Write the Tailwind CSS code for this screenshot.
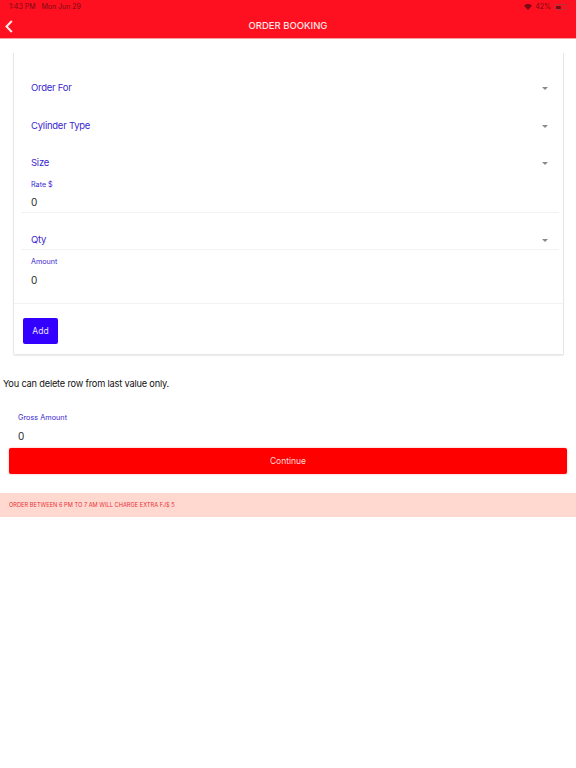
<!DOCTYPE html>
<html lang="en">
<head>
  <meta charset="UTF-8">
  <meta name="viewport" content="width=device-width, initial-scale=1.0">
  <title>Order Booking</title>
  <script src="https://cdn.jsdelivr.net/npm/@tailwindcss/browser@4"></script>
</head>
<body class="bg-white font-['Inter',sans-serif] w-[576px] h-[768px] overflow-hidden">

  <!-- Header with status bar -->
  <div class="h-[39px] bg-[#ff1020] border-b border-[#f8a0a0]">
    <div class="h-[14px] flex justify-between items-center pl-[9px] pr-[9px] text-[7px] text-[#7a0a14]">
      <div class="flex gap-[6px]"><span>1:43 PM</span><span>Mon Jun 29</span></div>
      <div class="flex items-center gap-[3px]">
        <svg class="w-[8px] h-[6px]" viewBox="0 0 16 12" fill="#7a0a14"><path d="M8 12 0 3.500C4.500-1 11.500-1 16 3.500Z"/></svg>
        <span>42%</span>
        <div class="w-[13px] h-[6px] rounded-[2px] border border-[#b8303a] flex p-[0.5px]"><div class="w-[5px] bg-[#7a0a14] rounded-[1px]"></div></div>
      </div>
    </div>
    <div class="h-[24px] relative flex items-center justify-center">
      <svg class="absolute left-[5px] top-[6px] w-[8px] h-[13px]" viewBox="0 0 8 13" fill="none" stroke="#ffe8e8" stroke-width="2"><path d="M6.800 1 1.500 6.500l5.300 5.500"/></svg>
      <span class="text-[9.500px] font-medium text-[#ffe4e4]">ORDER BOOKING</span>
    </div>
  </div>

  <!-- Form card -->
  <div class="ml-[13px] mt-[14px] w-[551px] h-[302px] border-x border-b border-[#e6e6e6] rounded-b-[2px] shadow-[0_1px_1px_rgba(0,0,0,0.08)]">
    <div class="pt-[16px] pl-[17px] pr-[15px] text-[#3a1fd0]">
      <div class="h-[38px] flex items-center justify-between text-[9.500px] tracking-[-0.25px]">
        <span>Order For</span>
        <div class="w-0 h-0 border-x-[3px] border-x-transparent border-t-[3px] border-t-[#8a8a8a]"></div>
      </div>
      <div class="h-[38px] flex items-center justify-between text-[9.500px] tracking-[-0.25px]">
        <span>Cylinder Type</span>
        <div class="w-0 h-0 border-x-[3px] border-x-transparent border-t-[3px] border-t-[#8a8a8a]"></div>
      </div>
      <div class="h-[36px] flex items-center justify-between text-[9.500px] tracking-[-0.25px]">
        <span>Size</span>
        <div class="w-0 h-0 border-x-[3px] border-x-transparent border-t-[3px] border-t-[#8a8a8a]"></div>
      </div>
    </div>

    <div class="ml-[7px] mr-[4px] h-[33px] border-b border-[#f2f2f2] pl-[10px] -mt-[1px]">
      <div class="text-[7.200px] leading-[10px] text-[#3a1fd0]">Rate $</div>
      <div class="text-[10px] leading-[12px] text-[#2a2a2a] mt-[6px]">0</div>
    </div>

    <div class="ml-[7px] mr-[4px] h-[37px] border-b border-[#f2f2f2] pl-[10px] pr-[11px] flex items-end justify-between text-[#3a1fd0]">
      <span class="text-[9.500px] tracking-[-0.25px] leading-[12px] mb-[3px]">Qty</span>
      <div class="w-0 h-0 mb-[7px] border-x-[3px] border-x-transparent border-t-[3px] border-t-[#8a8a8a]"></div>
    </div>

    <div class="h-[54px] border-b border-[#f2f2f2] pl-[17px]">
      <div class="text-[7.200px] leading-[10px] text-[#3a1fd0] pt-[7px]">Amount</div>
      <div class="text-[10px] leading-[12px] text-[#2a2a2a] mt-[7px]">0</div>
    </div>

    <div class="pl-[9px] pt-[14px]">
      <div class="w-[35px] h-[26px] rounded-[2px] bg-[#3300ff] text-[#e8e0ff] text-[8.500px] flex items-center justify-center">Add</div>
    </div>
  </div>

  <p class="pl-[3px] mt-[23px] text-[9.250px] tracking-[-0.2px] leading-[12px] text-[#111]">You can delete row from last value only.</p>

  <!-- Gross amount -->
  <div class="pl-[18px] mt-[23px]">
    <div class="text-[7.300px] leading-[10px] text-[#3a1fd0]">Gross Amount</div>
    <div class="text-[10px] leading-[12px] text-[#2a2a2a] mt-[7px]">0</div>
  </div>

  <div class="ml-[9px] mt-[6px] w-[558px] h-[26px] rounded-[2px] bg-[#ff0000] shadow-[0_0_2px_rgba(255,0,0,0.4)] text-[#ffd8d8] text-[8.500px] flex items-center justify-center">Continue</div>

  <div class="mt-[19px] h-[24px] bg-[#ffd9cf] pl-[9px] flex items-center text-[5.700px] text-[#e8303a]">ORDER BETWEEN 6 PM TO 7 AM WILL CHARGE EXTRA FJ$ 5</div>

</body>
</html>
